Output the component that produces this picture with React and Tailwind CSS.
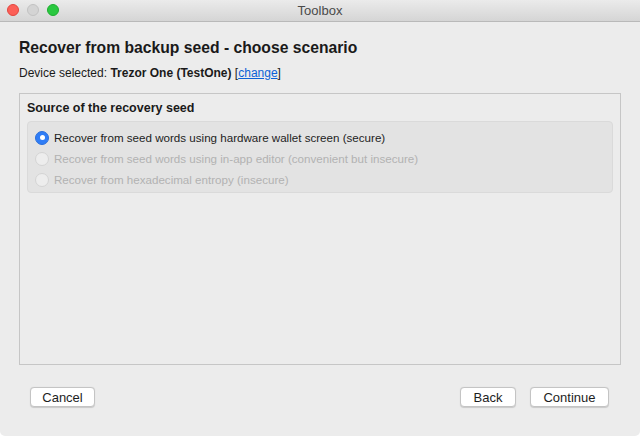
import React, { useState } from 'react';

const options = [
  { id: 'hw', label: 'Recover from seed words using hardware wallet screen (secure)', enabled: true },
  { id: 'app', label: 'Recover from seed words using in-app editor (convenient but insecure)', enabled: false },
  { id: 'hex', label: 'Recover from hexadecimal entropy (insecure)', enabled: false },
];

const Radio = ({ checked, enabled }) =>
  checked ? (
    <span className="w-[14px] h-[14px] rounded-full bg-[#2f7df6] border border-[#2a6fdc] flex items-center justify-center shrink-0">
      <span className="w-[5px] h-[5px] rounded-full bg-white" />
    </span>
  ) : (
    <span
      className={`w-[14px] h-[14px] rounded-full border shrink-0 ${
        enabled ? 'bg-white border-[#b5b5b5]' : 'bg-[#ededed] border-[#d4d4d4]'
      }`}
    />
  );

const Button = ({ children, width }) => (
  <button
    className={`${width} h-[20px] bg-white border border-[#c4c4c4] rounded-[4px] text-[13px] text-[#1d1d1d] leading-none shadow-[0_0.5px_1px_rgba(0,0,0,0.15)]`}
  >
    {children}
  </button>
);

const App = () => {
  const [selected, setSelected] = useState('hw');

  return (
    <div
      className="w-[640px] h-[436px] bg-[#ececec] flex flex-col overflow-hidden rounded-b-[5px]"
      style={{ fontFamily: '"Liberation Sans", Arial, sans-serif' }}
    >
      <div className="h-[22px] shrink-0 relative flex items-center justify-center bg-gradient-to-b from-[#ebebeb] to-[#d5d5d5] border-b border-[#b9b9b9]">
        <div className="absolute left-[7px] top-[4px] flex gap-[8px]">
          <span className="w-[12px] h-[12px] rounded-full bg-[#fc5f57] border border-[#e2463f]" />
          <span className="w-[12px] h-[12px] rounded-full bg-[#d4d4d4] border border-[#c2c2c2]" />
          <span className="w-[12px] h-[12px] rounded-full bg-[#2ac840] border border-[#1eae2f]" />
        </div>
        <span className="text-[13px] text-[#4a4a4a]">Toolbox</span>
      </div>

      <div className="flex-1 flex flex-col px-[19px] pt-[17px]">
        <h1 className="text-[15.7px] font-bold text-[#1a1a1a] leading-[18px]">
          Recover from backup seed - choose scenario
        </h1>
        <p className="mt-[9px] text-[12px] leading-[15px] text-[#1a1a1a]">
          Device selected: <span className="font-bold">Trezor One (TestOne)</span> [
          <span className="text-[#0b62d6] underline">change</span>]
        </p>

        <div className="mt-[12px] h-[272px] border border-[#c6c6c6] px-[7px] pt-[6px]">
          <h2 className="text-[12.5px] font-bold text-[#1a1a1a] leading-[16px]">Source of the recovery seed</h2>
          <div className="mt-[5px] bg-[#e3e3e3] border border-[#dadada] rounded-[4px] pl-[7px] pt-[5px] pb-[2px]">
            {options.map((o) => (
              <div
                key={o.id}
                onClick={() => o.enabled && setSelected(o.id)}
                className="h-[21px] flex items-center gap-[5px]"
              >
                <Radio checked={selected === o.id} enabled={o.enabled} />
                <span className={`text-[11.6px] ${o.enabled ? 'text-[#1d1d1d]' : 'text-[#b2b2b2]'}`}>
                  {o.label}
                </span>
              </div>
            ))}
          </div>
        </div>

        <div className="mt-[22px] flex items-center pl-[11px] pr-[12px]">
          <Button width="w-[65px]">Cancel</Button>
          <div className="ml-auto flex gap-[14px]">
            <Button width="w-[56px]">Back</Button>
            <Button width="w-[79px]">Continue</Button>
          </div>
        </div>
      </div>
    </div>
  );
};

export default App;
